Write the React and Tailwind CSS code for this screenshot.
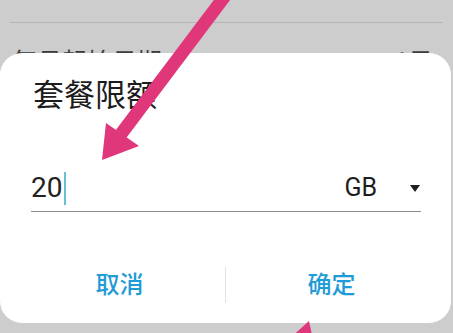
import React from "react";

export default function App() {
  return (
    <div
      className="relative w-[453px] h-[333px] overflow-hidden bg-[#cdcdcd]"
      style={{ fontFamily: 'Roboto, "Noto Sans CJK SC", sans-serif' }}
    >
      {/* dimmed list behind */}
      <div className="pt-[22px] px-[10px]">
        <div className="h-px bg-[#b6b6b6]" />
      </div>
      <div className="mt-[27px] flex justify-between pl-[12px] pr-[20px] text-[25px] leading-[25px] text-[#3c3c3c]">
        <span>每月起始日期</span>
        <span>1日</span>
      </div>

      {/* dialog */}
      <div className="absolute left-0 top-[53px] w-[451px] h-[270px] bg-white rounded-[22px] flex flex-col">
        <div className="pt-[28px] pl-[33px] text-[31px] leading-[30px] text-[#1c1c1c]">
          套餐限额
        </div>

        <div className="mt-[54px] ml-[31px] w-[390px] h-[47px] border-b border-[#8c8c8c] flex items-center">
          <span className="text-[28px] leading-[36px] text-[#222]">20</span>
          <span className="ml-[2px] w-[2px] h-[33px] bg-[#6cc0d6]" />
          <div className="flex-1" />
          <span className="text-[25px] leading-[30px] text-[#1e1e1e]">GB</span>
          <svg className="ml-[33px] mr-[1px]" width="10" height="7" viewBox="0 0 10 7">
            <polygon points="0,0 10,0 5,7" fill="#1e1e1e" />
          </svg>
        </div>

        <div className="mt-[55px] px-[14px] h-[36px] flex items-center">
          <button className="flex-1 text-[24px] leading-[30px] font-medium text-[#1f9bd7]">
            取消
          </button>
          <div className="w-px h-[36px] bg-[#e2e2e2]" />
          <button className="flex-1 text-[24px] leading-[30px] font-medium text-[#1f9bd7]">
            确定
          </button>
        </div>
      </div>

      {/* annotation arrows */}
      <svg
        className="absolute inset-0 pointer-events-none"
        width="453"
        height="333"
        viewBox="0 0 453 333"
      >
        <line x1="231" y1="-12" x2="121" y2="134" stroke="#e0367a" strokeWidth="13" />
        <polygon points="102,160 106,123 139,146" fill="#e0367a" />
        <polygon points="309,321 288,340 314,344" fill="#e0367a" />
      </svg>
    </div>
  );
}
